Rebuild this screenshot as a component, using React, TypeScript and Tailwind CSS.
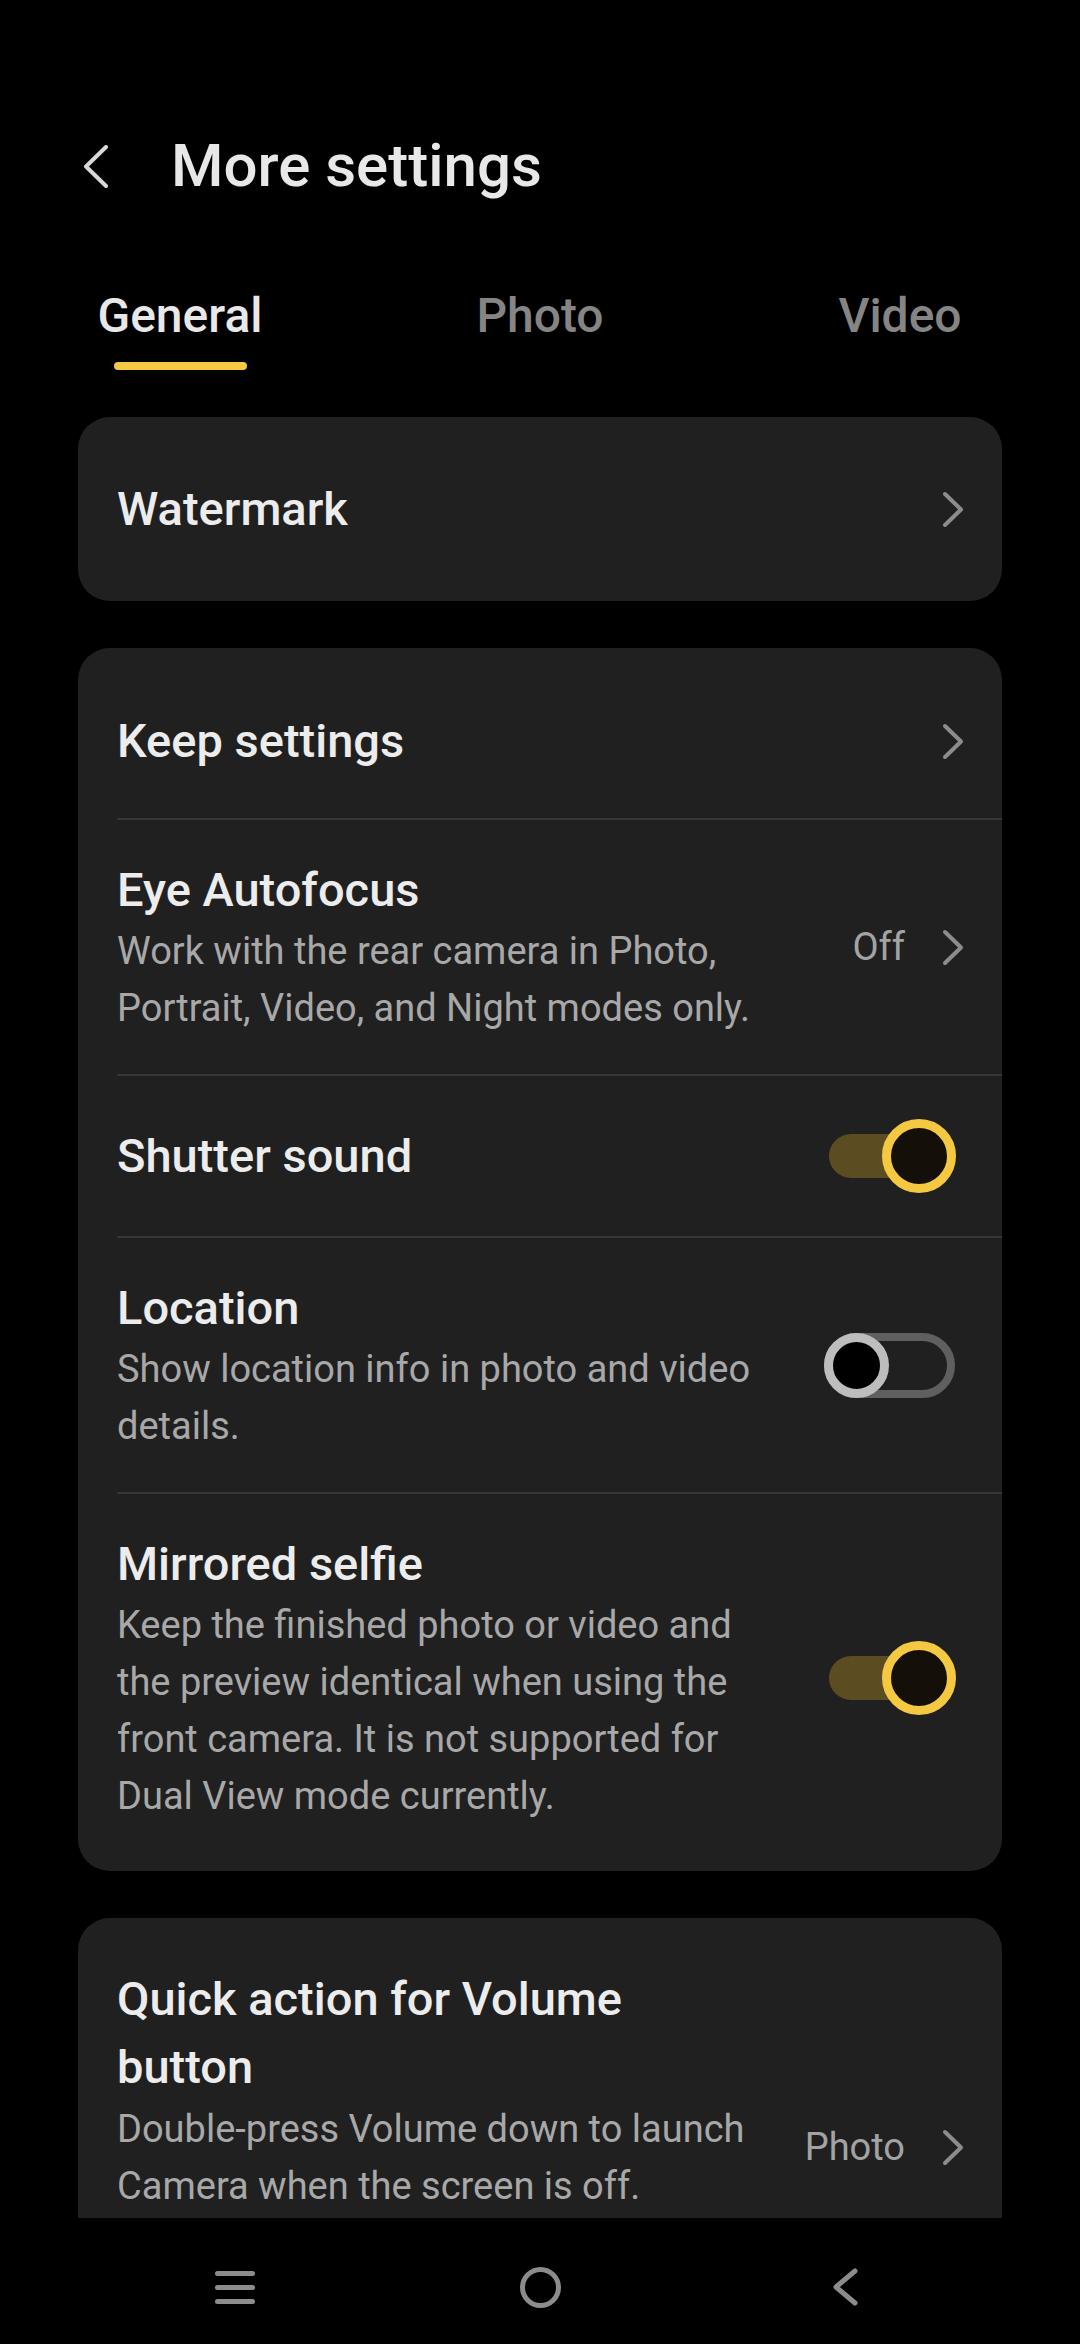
import React from "react";

type Item = {
  title: string;
  desc?: string;
  value?: string;
  chevron?: boolean;
  toggle?: "on" | "off";
  pad: string;
  titleLeading?: string;
  sideClass?: string;
};

const Chevron = ({ className = "" }: { className?: string }) => (
  <svg viewBox="0 0 22 37" className={"w-[22px] h-[37px] shrink-0 " + className}>
    <polyline
      points="3,3 19,18.5 3,34"
      fill="none"
      stroke="#8c8c8c"
      strokeWidth="4"
      strokeLinecap="round"
      strokeLinejoin="round"
    />
  </svg>
);

const Toggle = ({ on }: { on: boolean }) =>
  on ? (
    <div className="relative w-[127px] h-[74px] shrink-0 ml-[50px] mr-[8px]">
      <div className="absolute left-0 top-[15px] h-[44px] w-[100px] rounded-full bg-[#5c4c22]" />
      <div className="absolute right-0 top-0 size-[74px] rounded-full border-[9px] border-[#f5c842] bg-[#140f08]" />
    </div>
  ) : (
    <div className="relative w-[131px] h-[65px] shrink-0 ml-[50px] mr-[9px]">
      <div className="absolute inset-0 rounded-full border-[8px] border-[#5f5f5f]" />
      <div className="absolute left-0 top-0 size-[65px] rounded-full border-[9px] border-[#bdbdbd] bg-black" />
    </div>
  );

function Row({ item }: { item: Item }) {
  return (
    <div className={"flex items-center pl-[39px] pr-[38px] " + item.pad}>
      <div className="flex-1 min-w-0">
        <div
          className={
            "text-[47px] font-medium text-[#ececec] " + (item.titleLeading || "leading-[66px]")
          }
        >
          {item.title}
        </div>
        {item.desc && (
          <div className="text-[38px] leading-[57px] text-[#a8a8a8]">{item.desc}</div>
        )}
      </div>
      {item.chevron && (
        <div className={"flex items-center shrink-0 ml-[40px] " + (item.sideClass || "")}>
          {item.value && (
            <span className="mr-[37px] text-[38px] leading-[57px] text-[#a3a3a3]">
              {item.value}
            </span>
          )}
          <Chevron />
        </div>
      )}
      {item.toggle && <Toggle on={item.toggle === "on"} />}
    </div>
  );
}

function Card({ items, className = "" }: { items: Item[]; className?: string }) {
  return (
    <div className={"rounded-[32px] bg-[#202020] " + className}>
      {items.map((it, i) => (
        <div key={it.title}>
          {i > 0 && <div className="ml-[39px] h-[2px] bg-[#353535]" />}
          <Row item={it} />
        </div>
      ))}
    </div>
  );
}

export default function App() {
  return (
    <div className="w-[1080px] h-[2344px] bg-black flex flex-col overflow-hidden font-['Roboto','Noto_Sans',sans-serif]">
      <div className="flex-1 min-h-0 overflow-hidden">
        <header className="flex items-center pl-[83px] pt-[126px]">
          <svg viewBox="0 0 26 43" className="w-[26px] h-[43px]">
            <polyline
              points="23,2 3,21.5 23,41"
              fill="none"
              stroke="#d8d8d8"
              strokeWidth="4"
              strokeLinecap="round"
              strokeLinejoin="round"
            />
          </svg>
          <h1 className="ml-[62px] text-[60px] leading-[80px] font-medium text-[#e8e8e8]">
            More settings
          </h1>
        </header>

        <nav className="mt-[78px] grid grid-cols-3">
          {["General", "Photo", "Video"].map((t, i) => (
            <div key={t} className="flex flex-col items-center">
              <span
                className={
                  "text-[48px] leading-[64px] font-medium " +
                  (i === 0 ? "text-[#e8e8e8]" : "text-[#858585]")
                }
              >
                {t}
              </span>
              <div
                className={
                  "mt-[14px] h-[8px] w-[133px] rounded-full " +
                  (i === 0 ? "bg-[#f5c842]" : "bg-transparent")
                }
              />
            </div>
          ))}
        </nav>

        <main className="mt-[47px] px-[78px] flex flex-col gap-[47px]">
          <Card items={[{ title: "Watermark", chevron: true, pad: "py-[59px]" }]} />

          <Card
            className="pt-[10px] pb-[9px]"
            items={[
              { title: "Keep settings", chevron: true, pad: "pt-[50px] pb-[44px]" },
              {
                title: "Eye Autofocus",
                desc: "Work with the rear camera in Photo, Portrait, Video, and Night modes only.",
                value: "Off",
                chevron: true,
                pad: "py-[37px]",
              },
              { title: "Shutter sound", toggle: "on", pad: "py-[43px]" },
              {
                title: "Location",
                desc: "Show location info in photo and video details.",
                toggle: "off",
                pad: "py-[37px]",
              },
              {
                title: "Mirrored selfie",
                desc: "Keep the finished photo or video and the preview identical when using the front camera. It is not supported for Dual View mode currently.",
                toggle: "on",
                pad: "py-[37px]",
              },
            ]}
          />

          <Card
            className="pt-[10px]"
            items={[
              {
                title: "Quick action for Volume button",
                desc: "Double-press Volume down to launch Camera when the screen is off.",
                value: "Photo",
                chevron: true,
                pad: "pt-[37px] pb-[151px]",
                titleLeading: "leading-[68px]",
                sideClass: "mt-[114px]",
              },
            ]}
          />
        </main>
      </div>

      <footer className="h-[126px] shrink-0 bg-black flex justify-center items-center pt-[12px]">
        <div className="w-[915px] grid grid-cols-3 justify-items-center items-center">
          <div className="w-[40px] flex flex-col gap-[9px]">
            <div className="h-[5px] rounded-full bg-[#8c8c8c]" />
            <div className="h-[5px] rounded-full bg-[#8c8c8c]" />
            <div className="h-[5px] rounded-full bg-[#8c8c8c]" />
          </div>
          <div className="size-[41px] rounded-full border-[5px] border-[#8c8c8c]" />
          <svg viewBox="0 0 25 38" className="w-[25px] h-[38px]">
            <polyline
              points="22,3 3,19 22,35"
              fill="none"
              stroke="#8c8c8c"
              strokeWidth="5"
              strokeLinecap="round"
              strokeLinejoin="round"
            />
          </svg>
        </div>
      </footer>
    </div>
  );
}
